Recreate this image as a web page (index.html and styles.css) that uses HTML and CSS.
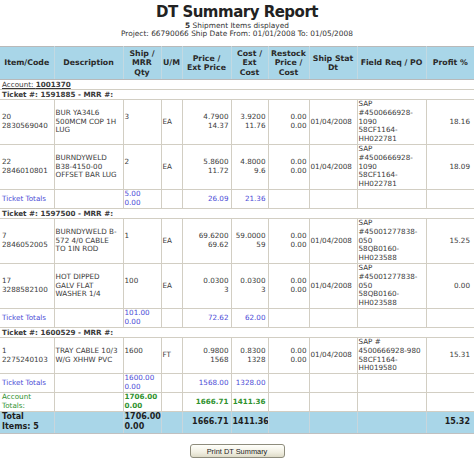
FILE: index.html
```html
<!DOCTYPE html>
<html>
<head>
<meta charset="utf-8">
<title>DT Summary Report</title>
<link rel="stylesheet" href="styles.css">
</head>
<body>
<div class="head">
  <h1 class="title">DT Summary Report</h1>
  <div class="sub"><b>5</b> Shipment Items displayed</div>
  <div class="sub">Project: 66790066 Ship Date From: 01/01/2008 To: 01/05/2008</div>
</div>
<table class="report">
  <colgroup>
    <col class="w-item"><col class="w-desc"><col class="w-qty"><col class="w-um"><col class="w-price"><col class="w-cost"><col class="w-restock"><col class="w-date"><col class="w-field"><col class="w-profit">
  </colgroup>
  <thead>
    <tr>
      <th>Item/Code</th><th>Description</th><th>Ship /<br>MRR<br>Qty</th><th>U/M</th><th>Price /<br>Ext Price</th><th>Cost /<br>Ext<br>Cost</th><th>Restock<br>Price /<br>Cost</th><th>Ship Stat<br>Dt</th><th>Field Req / PO</th><th>Profit %</th>
    </tr>
  </thead>
  <tbody>
    <tr class="account"><td colspan="10"><span class="acct">Account: <b>1001370</b></span></td></tr>
    <tr class="ticket"><td colspan="10">Ticket #: 1591885 - MRR #:</td></tr>
    <tr>
      <td>20<br>2830569040</td><td>BUR YA34L6<br>500MCM COP 1H<br>LUG</td><td>3<br>&nbsp;</td><td>EA</td>
      <td class="num">4.7900<br>14.37</td><td class="num">3.9200<br>11.76</td><td class="num">0.00<br>0.00</td>
      <td>01/04/2008</td><td>SAP<br>#4500666928-<br>1090<br>58CF1164-<br>HH022781</td><td class="num pr">18.16</td>
    </tr>
    <tr>
      <td>22<br>2846010801</td><td>BURNDYWELD<br>B38-4150-00<br>OFFSET BAR LUG</td><td>2<br>&nbsp;</td><td>EA</td>
      <td class="num">5.8600<br>11.72</td><td class="num">4.8000<br>9.6</td><td class="num">0.00<br>0.00</td>
      <td>01/04/2008</td><td>SAP<br>#4500666928-<br>1090<br>58CF1164-<br>HH022781</td><td class="num pr">18.09</td>
    </tr>
    <tr class="tt">
      <td>Ticket Totals</td><td></td><td>5.00<br>0.00</td><td></td><td class="num">26.09</td><td class="num">21.36</td><td></td><td></td><td></td><td></td>
    </tr>
    <tr class="ticket"><td colspan="10">Ticket #: 1597500 - MRR #:</td></tr>
    <tr>
      <td>7<br>2846052005</td><td>BURNDYWELD B-<br>572 4/0 CABLE<br>TO 1IN ROD</td><td>1<br>&nbsp;</td><td>EA</td>
      <td class="num">69.6200<br>69.62</td><td class="num">59.0000<br>59</td><td class="num">0.00<br>0.00</td>
      <td>01/04/2008</td><td>SAP<br>#45001277838-<br>050<br>58QB0160-<br>HH023588</td><td class="num pr">15.25</td>
    </tr>
    <tr>
      <td>17<br>3288582100</td><td>HOT DIPPED<br>GALV FLAT<br>WASHER 1/4</td><td>100<br>&nbsp;</td><td>EA</td>
      <td class="num">0.0300<br>3</td><td class="num">0.0300<br>3</td><td class="num">0.00<br>0.00</td>
      <td>01/04/2008</td><td>SAP<br>#45001277838-<br>050<br>58QB0160-<br>HH023588</td><td class="num pr">0.00</td>
    </tr>
    <tr class="tt">
      <td>Ticket Totals</td><td></td><td>101.00<br>0.00</td><td></td><td class="num">72.62</td><td class="num">62.00</td><td></td><td></td><td></td><td></td>
    </tr>
    <tr class="ticket"><td colspan="10">Ticket #: 1600529 - MRR #:</td></tr>
    <tr>
      <td>1<br>2275240103</td><td>TRAY CABLE 10/3<br>W/G XHHW PVC</td><td>1600<br>&nbsp;</td><td>FT</td>
      <td class="num">0.9800<br>1568</td><td class="num">0.8300<br>1328</td><td class="num">0.00<br>0.00</td>
      <td>01/04/2008</td><td>SAP #<br>4500666928-980<br>58CF1164-<br>HH019580</td><td class="num pr">15.31</td>
    </tr>
    <tr class="tt">
      <td>Ticket Totals</td><td></td><td>1600.00<br>0.00</td><td></td><td class="num">1568.00</td><td class="num">1328.00</td><td></td><td></td><td></td><td></td>
    </tr>
    <tr class="at">
      <td>Account<br>Totals:</td><td></td><td class="strong">1706.00<br>0.00</td><td></td><td class="num strong">1666.71</td><td class="num strong">1411.36</td><td></td><td></td><td></td><td></td>
    </tr>
    <tr class="total">
      <td>Total<br>Items: 5</td><td></td><td>1706.00<br>0.00</td><td></td><td class="num">1666.71</td><td class="num">1411.36</td><td></td><td></td><td></td><td class="num pr">15.32</td>
    </tr>
  </tbody>
</table>
<div class="actions">
  <button class="print" type="button">Print DT Summary</button>
</div>
</body>
</html>
```
FILE: styles.css
```css
html, body {
  margin: 0;
  padding: 0;
  background: #ffffff;
}
body {
  width: 474px;
  font-family: "DejaVu Sans", Verdana, sans-serif;
  color: #3a3a3a;
}
.head {
  text-align: center;
  padding-top: 2px;
}
.title {
  margin: 0;
  font-size: 15px;
  line-height: 20px;
  letter-spacing: -0.5px;
  color: #222222;
  font-weight: bold;
}
.sub {
  font-size: 7.4px;
  line-height: 7.5px;
  color: #333333;
}
.report {
  margin-top: 9px;
  width: 474px;
  table-layout: fixed;
  border-collapse: collapse;
  font-size: 7.2px;
  line-height: 8.8px;
}
.w-item { width: 54px; }
.w-desc { width: 69px; }
.w-qty { width: 38px; }
.w-um { width: 21px; }
.w-price { width: 49px; }
.w-cost { width: 37px; }
.w-restock { width: 41px; }
.w-date { width: 48px; }
.w-field { width: 69px; }
.w-profit { width: 48px; }

.report th {
  background: #a9d6e8;
  color: #2a2a2a;
  font-size: 7.8px;
  line-height: 9.3px;
  font-weight: bold;
  padding: 2px 0;
  text-align: center;
  border-left: 1px solid #c3d9e2;
  border-right: 1px solid #c3d9e2;
  border-top: 1px solid #b9b9b9;
  border-bottom: 1px solid #b9b9b9;
  white-space: nowrap;
  height: 28px;
}
.report th:first-child { border-left: 0; }
.report th:last-child { border-right: 0; }

.report td {
  border: 1px solid #d2cec3;
  padding: 0 2px 0 1px;
  vertical-align: middle;
  white-space: nowrap;
  overflow: hidden;
}
.report td:first-child { border-left: 0; padding-left: 2px; }
.report td:last-child { border-right: 0; }
.report .num { text-align: right; }
.report .pr { padding-right: 4px; }

.account td {
  height: 9px;
  line-height: 9px;
}
.acct {
  text-decoration: underline;
}
.acct b { font-weight: bold; }
.ticket td {
  font-weight: bold;
  height: 9px;
  line-height: 9px;
}
.tt td {
  color: #4b4bd6;
  height: 18px;
}
.at td {
  color: #2f922f;
}
.at .strong { font-weight: bold; }
.total td {
  background: #a9d6e8;
  color: #1e1e1e;
  font-weight: bold;
  font-size: 8px;
  line-height: 10px;
  height: 21px;
  border-color: #c9d6dc;
  border-bottom: 1px solid #c0c0c0;
}

.actions {
  text-align: center;
  padding-top: 5px;
}
.print {
  width: 95px;
  height: 14px;
  padding: 0;
  font-family: "Liberation Sans", Arial, sans-serif;
  font-size: 7.4px;
  color: #222222;
  background: linear-gradient(#fffffb, #f1efe2 60%, #dedbc8);
  border: 1px solid #8e8c7c;
  border-radius: 3px;
}
```
